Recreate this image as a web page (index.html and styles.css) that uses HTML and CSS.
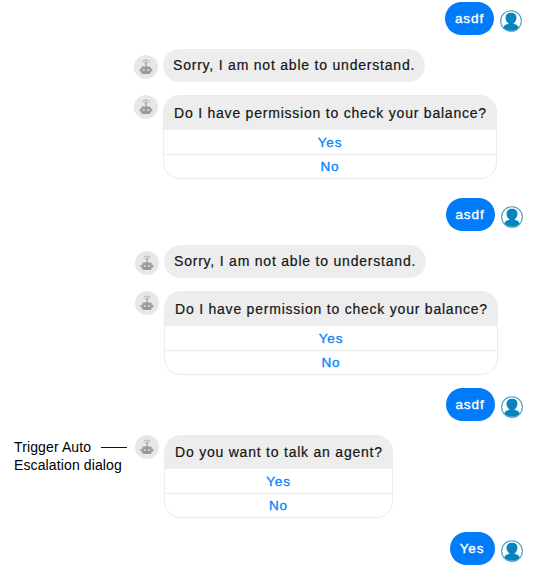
FILE: index.html
```html
<!DOCTYPE html>
<html lang="en">
<head>
<meta charset="utf-8">
<title>Chat</title>
<link rel="stylesheet" href="styles.css">
</head>
<body>
<svg class="defs" width="0" height="0" aria-hidden="true">
  <symbol id="bot" viewBox="0 0 24 24">
    <circle cx="12" cy="12" r="12" fill="#e7e7e7"/>
    <g fill="none" stroke="#aaa" stroke-width="1">
      <path d="M8.6 7.2Q9.2 5 12 5T15.4 7.2M10.3 8.2Q12 6.3 13.7 8.2"/>
      <path d="M12 7.5V12" stroke="#999" stroke-width="1.2"/>
    </g>
    <rect x="7.3" y="11.6" width="9.4" height="7.4" rx="1.4" fill="#999"/>
    <path d="M7.4 13.4Q5.4 13.6 5.4 15.1T7.4 16.8M16.6 13.4Q18.6 13.6 18.6 15.1T16.6 16.8" fill="#999"/>
    <circle cx="9.9" cy="15" r="1.05" fill="#ddd"/>
    <circle cx="14.1" cy="15" r="1.05" fill="#ddd"/>
  </symbol>
  <symbol id="person" viewBox="0 0 23 23">
    <circle cx="11.5" cy="11.5" r="10.8" fill="#fff" stroke="#3d9cc5" stroke-width="1.1"/>
    <path d="M11.5 2.8C8 2.8 5.8 4.8 5.8 8C5.8 10.8 7.3 13 9.2 14.2C8.4 15.2 4.4 14.6 3.6 18.6C8 22.8 15 22.8 19.4 18.6C18.6 14.6 14.6 15.2 13.8 14.2C15.7 13 17.2 10.8 17.2 8C17.2 4.8 15 2.8 11.5 2.8Z" fill="#0883bd"/>
  </symbol>
</svg>
<main class="chat">
  <div class="row user first"><p class="reply">asdf</p><svg class="person"><use href="#person"/></svg></div>
  <div class="row bot message first"><svg class="robot"><use href="#bot"/></svg><p class="bubble">Sorry, I am not able to understand.</p></div>
  <div class="row bot question first"><svg class="robot"><use href="#bot"/></svg>
    <section class="card"><p class="prompt">Do I have permission to check your balance?</p><div class="option">Yes</div><div class="option">No</div></section></div>
  <div class="row user second"><p class="reply">asdf</p><svg class="person"><use href="#person"/></svg></div>
  <div class="row bot message"><svg class="robot"><use href="#bot"/></svg><p class="bubble">Sorry, I am not able to understand.</p></div>
  <div class="row bot question"><svg class="robot"><use href="#bot"/></svg>
    <section class="card"><p class="prompt">Do I have permission to check your balance?</p><div class="option">Yes</div><div class="option">No</div></section></div>
  <div class="row user third"><p class="reply">asdf</p><svg class="person"><use href="#person"/></svg></div>
  <div class="row bot question escalation">
    <aside class="note"><span>Trigger Auto<br>Escalation dialog</span><i class="leader"></i></aside>
    <svg class="robot"><use href="#bot"/></svg>
    <section class="card short"><p class="prompt">Do you want to talk an agent?</p><div class="option">Yes</div><div class="option">No</div></section></div>
  <div class="row user fourth"><p class="reply yes">Yes</p><svg class="person"><use href="#person"/></svg></div>
</main>
</body>
</html>
```

FILE: styles.css
```css
* { box-sizing: border-box; }
body { margin: 0; background: #fff; overflow: hidden; font-family: "Liberation Sans", Arial, sans-serif; }
p { margin: 0; }
.defs { position: absolute; }
.chat { width: 533px; height: 565px; padding-top: 2px; overflow: hidden; display: flex; flex-direction: column; }
.row { display: flex; flex: none; align-items: flex-start; }
.robot { width: 24px; height: 24px; flex: none; }
.person { width: 22px; height: 22px; flex: none; margin-top: 8px; }

.user { height: 33px; justify-content: flex-end; gap: 6px; padding-right: 11px; }
.user.second { margin-top: 19px; }
.user.second, .user.third, .user.fourth { padding-right: 10.5px; }
.user.third { margin-top: 13px; }
.user.fourth { margin-top: 14px; }
.reply { width: 49px; height: 33px; border-radius: 17px; background: #007bfa; color: #fff; font-size: 13.5px; line-height: 34px; letter-spacing: .9px; text-align: center; -webkit-text-stroke: .4px #fff; }
.reply.yes { width: 45px; }

.bot { gap: 5px; padding-left: 135px; }
.bot.first { padding-left: 134px; }
.message { margin-top: 14px; height: 33px; }
.message .robot { margin-top: 6px; }
.bubble { width: 262px; height: 33px; padding-left: 10px; border-radius: 17px; background: #ededed; color: #151515; font-size: 14px; line-height: 33px; letter-spacing: .79px; white-space: nowrap; -webkit-text-stroke: .2px #151515; }
.question { margin-top: 13px; }
.card { width: 334px; height: 84px; border: 1px solid #ececec; border-radius: 16px; overflow: hidden; }
.card.short { width: 229px; height: 83px; }
.prompt { height: 34px; padding-left: 10px; background: #ededed; color: #151515; font-size: 14px; line-height: 35px; letter-spacing: .78px; white-space: nowrap; -webkit-text-stroke: .2px #151515; }
.short .prompt { height: 33px; line-height: 33px; }
.option { height: 24px; color: #0a84ff; font-size: 13.5px; line-height: 25px; letter-spacing: .8px; text-align: center; -webkit-text-stroke: .35px #0a84ff; }
.option + .option { border-top: 1px solid #ececec; line-height: 23px; }
.bot.escalation { margin-top: 14px; padding-left: 14px; gap: 0; }
.escalation .card { margin-left: 5px; }
.note { position: relative; width: 121px; height: 44px; padding-top: 3px; color: #000; font-size: 14px; line-height: 18px; letter-spacing: .12px; white-space: nowrap; }
.leader { position: absolute; left: 87px; top: 12px; width: 26px; height: 1px; background: #111; }
```
